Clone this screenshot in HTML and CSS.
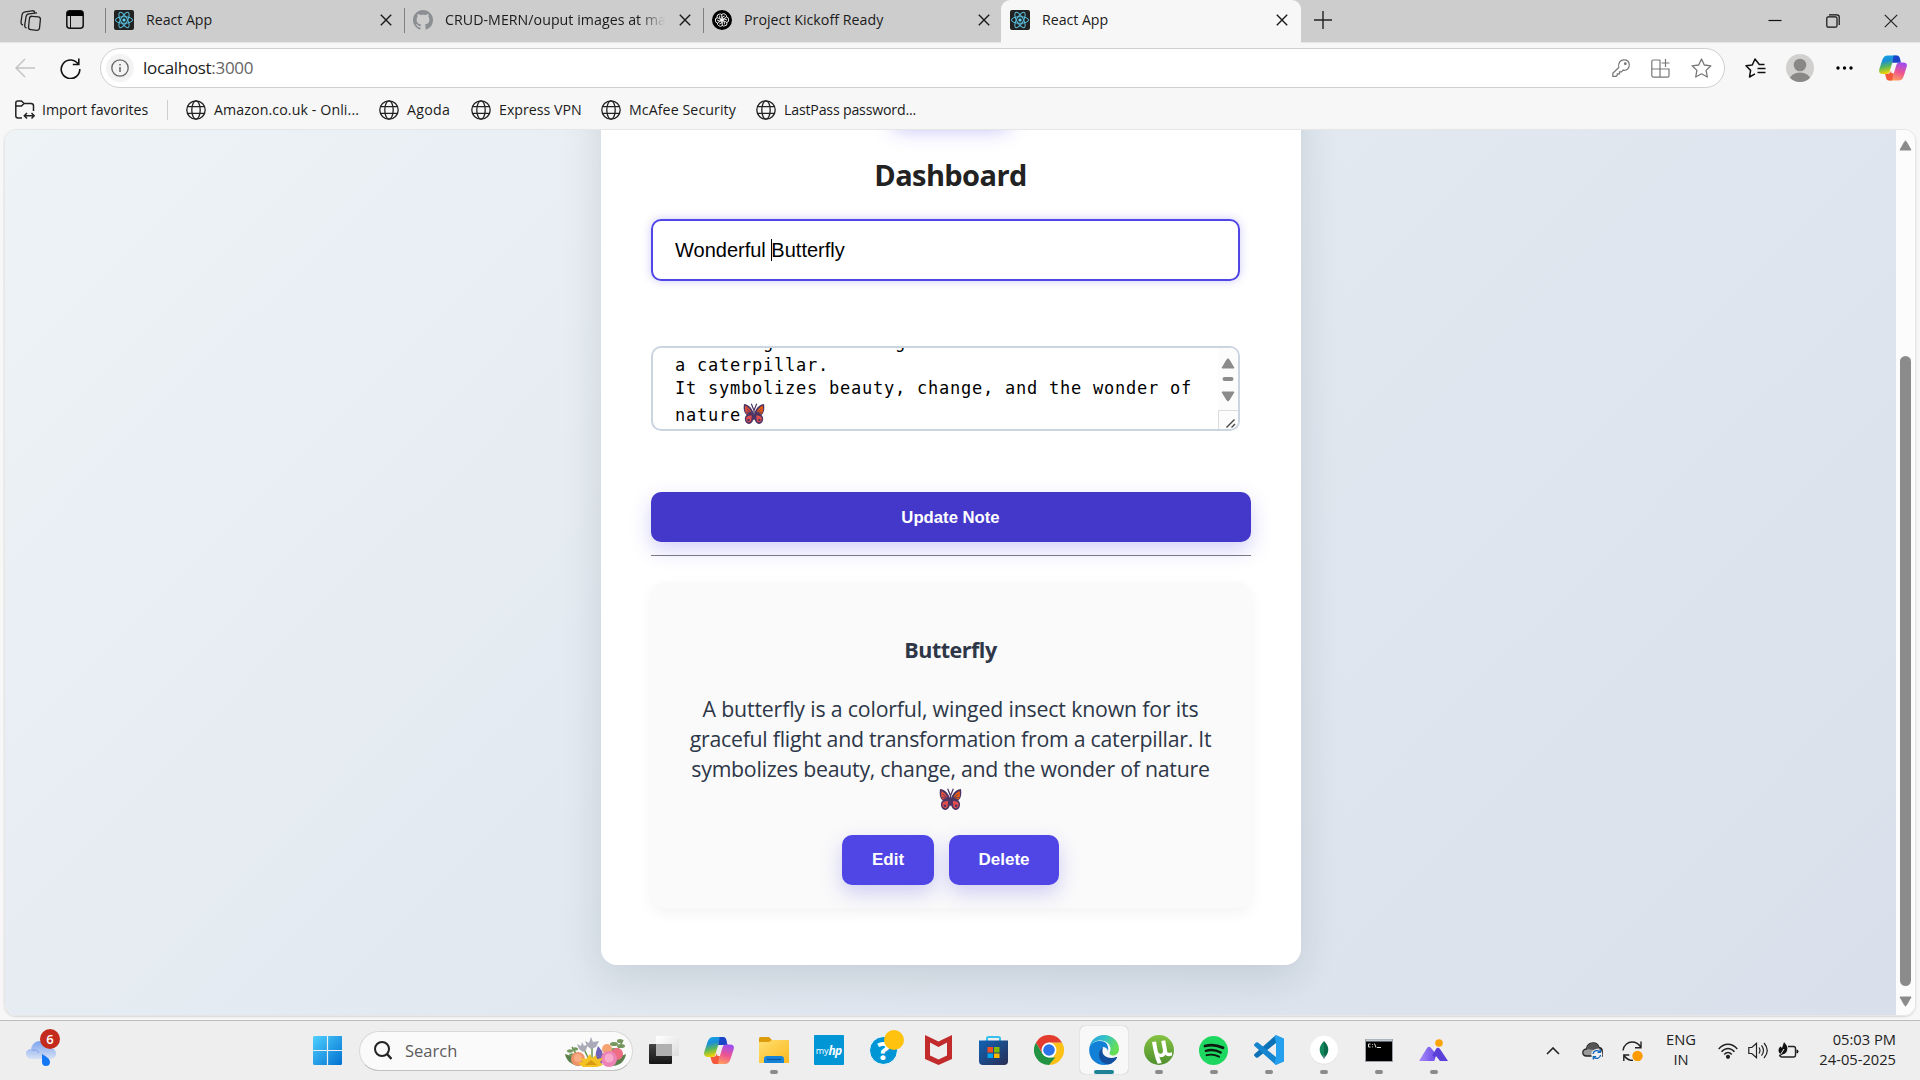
FILE: index.html
```html
<!DOCTYPE html>
<html lang="en">
<head>
<meta charset="utf-8">
<title>React App</title>
<link rel="stylesheet" href="styles.css">
</head>
<body>
<svg class="defs" width="0" height="0">
  <defs>
    <linearGradient id="cpA" x1="0" y1="0" x2=".25" y2="1"><stop offset="0" stop-color="#12a4e8"/><stop offset=".35" stop-color="#1b8fd8"/><stop offset=".65" stop-color="#5cb85a"/><stop offset="1" stop-color="#f5d400"/></linearGradient>
    <linearGradient id="cpB" x1=".6" y1="0" x2=".3" y2="1"><stop offset="0" stop-color="#a04df0"/><stop offset=".5" stop-color="#ee5590"/><stop offset="1" stop-color="#ffa45c"/></linearGradient>
    <linearGradient id="win" x1="0" y1="0" x2="1" y2="1"><stop offset="0" stop-color="#4fd0ff"/><stop offset="1" stop-color="#0070d0"/></linearGradient>
    <linearGradient id="cloud" x1="0" y1="0" x2="0" y2="1"><stop offset="0" stop-color="#7da3ee"/><stop offset="1" stop-color="#d5e1f5"/></linearGradient>
    <linearGradient id="folder" x1="0" y1="0" x2="1" y2="1"><stop offset="0" stop-color="#ffdf70"/><stop offset="1" stop-color="#fbb91e"/></linearGradient>
    <linearGradient id="store" x1="0" y1="0" x2="1" y2="1"><stop offset="0" stop-color="#0f63b5"/><stop offset="1" stop-color="#2b2e55"/></linearGradient>
    <linearGradient id="edgeTop" x1="0" y1="0" x2="1" y2=".4"><stop offset="0" stop-color="#1f9fe0"/><stop offset=".5" stop-color="#35c1c8"/><stop offset="1" stop-color="#66df55"/></linearGradient>
    <linearGradient id="ut" x1="0" y1="0" x2="0" y2="1"><stop offset="0" stop-color="#84c341"/><stop offset="1" stop-color="#4e8f2f"/></linearGradient>
    <linearGradient id="hill" x1="0" y1="0" x2="1" y2="0"><stop offset="0" stop-color="#a78bfa"/><stop offset="1" stop-color="#6d4de6"/></linearGradient>
    <linearGradient id="dark" x1="0" y1="0" x2="0" y2="1"><stop offset="0" stop-color="#444"/><stop offset="1" stop-color="#151515"/></linearGradient>
    <symbol id="react" viewBox="0 0 20 20"><rect width="20" height="20" rx="2" fill="#222"/><g fill="none" stroke="#58bfdc" stroke-width="1"><ellipse cx="10" cy="10" rx="8.600" ry="3.300"/><ellipse cx="10" cy="10" rx="8.600" ry="3.300" transform="rotate(60 10 10)"/><ellipse cx="10" cy="10" rx="8.600" ry="3.300" transform="rotate(120 10 10)"/></g><circle cx="10" cy="10" r="1.600" fill="#61dafb"/></symbol>
    <symbol id="close" viewBox="0 0 12 12"><path d="M.8.8l10.400 10.400M11.200.8L.8 11.200" stroke="#1a1a1a" stroke-width="1.400"/></symbol>
    <symbol id="globe" viewBox="0 0 20 20"><g fill="none" stroke="#222" stroke-width="1.300"><circle cx="10" cy="10" r="9.200"/><ellipse cx="10" cy="10" rx="4.200" ry="9.200"/><path d="M1.600 6.700h16.800M1.600 13.300h16.800"/></g></symbol>
    <symbol id="copilot" viewBox="0 0 30 27"><path d="M17 0h-7.500C6 0 4.500 2 3.500 5L.4 14.500C-.6 18 .8 20 4 20h4c2 0 3-1.200 3.500-3l3.300-11c.7-2.300 1.500-3.500 3.500-3.500h3C20.700 1 19.500 0 17 0z" fill="url(#cpA)"/><path d="M15.500 0h3.800c2 0 2.700 1.500 3.200 3.300L23.500 8H14l1-3.500c.5-1.500.5-3 .5-4.500z" fill="#1b45c8"/><path d="M13 27h7.500c3.500 0 5-2 6-5l3.100-9.500C30.600 9 29.200 7.500 26 7.500h-4c-2 0-3 1.200-3.500 3l-3.300 11c-.7 2.300-1.500 3.500-3.500 3.500h-3C9.300 26 10.500 27 13 27z" fill="url(#cpB)"/><path d="M14 27h-3.300c-2 0-2.700-1.500-3.200-3.300L6.500 20H9c2 0 3.300-1.700 3.800-3.500L13.500 19h2.400l-1 4c-.5 1.500-.5 4-.9 4z" fill="#f4593c"/></symbol>
    <symbol id="butterfly" viewBox="0 0 22 22"><path d="M1 1c4 .4 7.500 3.500 9.300 8L11 12l.7-3C13.500 4.500 17 1.400 21 1c.8 4.500.2 9-2.600 11 1.800 1.300 2.300 4 1.200 6.500-1.500 3.300-5.600 3.200-7.100.1L11 15.500l-1.500 3.100c-1.500 3.100-5.600 3.200-7.100-.1C1.300 16 1.800 13.300 3.600 12 .8 10 .2 5.500 1 1z" fill="#4c3563"/><path d="M2.300 2.800c2 .8 4.500 3 6 6.200l-5 2C2 9 1.700 6 2.300 2.800z" fill="#e2503d"/><path d="M19.700 2.800c-2 .8-4.500 3-6 6.200l5 2c1.300-2 1.600-5 1-8.200z" fill="#f6600c"/><path d="M8.800 12.600c-2-.4-5.300.4-5.600 2.500-.5 4.500 4 5.500 5 2.500zM13.200 12.600c2-.4 5.300.4 5.600 2.500.5 4.500-4 5.500-5 2.500z" fill="#e54d4c"/><path d="M3.500 6l4 3M18.500 6l-4 3M3 9.200l5 .3M19 9.200l-5 .3" stroke="#4c3563" stroke-width=".8"/><circle cx="5.600" cy="17" r="1.200" fill="#4c3563"/><circle cx="16.400" cy="17" r="1.200" fill="#4c3563"/><path d="M11 17V7M11 7.500L8.300.8M11 7.500L13.700.8" stroke="#4c3563" stroke-width="1.200" fill="none"/></symbol>
  </defs>
</svg>

<header class="tabstrip">
  <div class="tab-tools">
    <svg width="22" height="21" viewBox="0 0 22 21" fill="none" stroke="#222" stroke-width="1.300"><rect x="9" y="6.500" width="11" height="13.500" rx="2.500" transform="rotate(6 14 13)"/><path d="M6.500 18c-1.500-.3-2-1.300-1.800-2.800L6 7c.3-2 1.300-3 3-3.200l8-.9M3 15.200C1.500 14.500.8 13.500 1 12l1-7c.3-2 1.300-2.900 3-3.200L12 .8c1.500-.2 2.500.3 2.800 1.700"/></svg>
    <svg width="18" height="19" viewBox="0 0 18 19"><rect x=".8" y=".8" width="16.400" height="17.400" rx="3" fill="none" stroke="#111" stroke-width="1.500"/><path d="M1 6V3.500C1 2 2 1 3.500 1h11C16 1 17 2 17 3.500V6z" fill="#000"/><path d="M4.500 6v12" stroke="#111" stroke-width="1"/></svg>
  </div>
  <div class="tab"><svg class="fav"><use href="#react"/></svg><span class="tab-title">React App</span><svg class="x"><use href="#close"/></svg></div>
  <div class="tab"><svg class="fav" viewBox="0 0 16 16"><path fill="#8b8e92" d="M8 0C3.580 0 0 3.580 0 8c0 3.540 2.290 6.530 5.470 7.590.4.070.55-.17.55-.38 0-.19-.01-.82-.01-1.490-2.010.37-2.530-.49-2.690-.94-.09-.23-.48-.94-.82-1.130-.28-.15-.68-.52-.01-.53.63-.01 1.080.58 1.230.82.72 1.210 1.870.87 2.330.66.07-.52.28-.87.51-1.070-1.780-.2-3.640-.89-3.640-3.950 0-.87.31-1.590.82-2.150-.08-.2-.36-1.020.08-2.120 0 0 .67-.21 2.200.82.64-.18 1.320-.27 2-.27s1.360.09 2 .27c1.530-1.040 2.200-.82 2.200-.82.44 1.100.16 1.920.08 2.120.51.56.82 1.270.82 2.150 0 3.070-1.870 3.750-3.650 3.950.29.25.54.73.54 1.480 0 1.070-.01 1.930-.01 2.200 0 .21.15.46.55.38A8.010 8.010 0 0 0 16 8c0-4.420-3.580-8-8-8z"/></svg><span class="tab-title fade">CRUD-MERN/ouput images at main</span><svg class="x"><use href="#close"/></svg></div>
  <div class="tab"><svg class="fav" viewBox="0 0 20 20"><circle cx="10" cy="10" r="10" fill="#000"/><g fill="none" stroke="#fff" stroke-width=".9"><path id="petal" d="M10 4.200a3 3 0 0 1 4.600 2.900L10 9.700 7.700 8.300V5.600"/><use href="#petal" transform="rotate(60 10 10)"/><use href="#petal" transform="rotate(120 10 10)"/><use href="#petal" transform="rotate(180 10 10)"/><use href="#petal" transform="rotate(240 10 10)"/><use href="#petal" transform="rotate(300 10 10)"/></g></svg><span class="tab-title wide">Project Kickoff Ready</span><svg class="x"><use href="#close"/></svg></div>
  <div class="tab active"><svg class="fav"><use href="#react"/></svg><span class="tab-title">React App</span><svg class="x"><use href="#close"/></svg></div>
  <svg class="plus" width="18" height="18" viewBox="0 0 18 18"><path d="M9 0v18M0 9h18" stroke="#222" stroke-width="1.400"/></svg>
  <div class="window-buttons">
    <svg width="14" height="14" viewBox="0 0 14 14"><path d="M.5 6.500h13" stroke="#111" stroke-width="1.200"/></svg>
    <svg width="14" height="14" viewBox="0 0 14 14" fill="none" stroke="#111" stroke-width="1.200"><rect x=".8" y="2.800" width="10.200" height="10.400" rx="1.500"/><path d="M3 .8h8c1.300 0 2.200.9 2.200 2.200v8"/></svg>
    <svg width="14" height="14" viewBox="0 0 14 14"><path d="M.8.8l12.400 12.400M13.200.8L.8 13.200" stroke="#222" stroke-width="1.200"/></svg>
  </div>
</header>

<nav class="toolbar">
  <svg class="back" width="20" height="20" viewBox="0 0 20 20" fill="none" stroke="#c4c4c4" stroke-width="1.500"><path d="M20 10H1M10 1L1 10l9 9"/></svg>
  <svg class="reload" width="21" height="21" viewBox="0 0 21 21" fill="none" stroke="#111" stroke-width="1.600"><path d="M18.500 6.500A9.300 9.300 0 1 0 19.800 11M18.800.5v6h-6"/></svg>
  <div class="address">
    <span class="info"><svg width="18" height="18" viewBox="0 0 18 18" fill="none" stroke="#666" stroke-width="1.300"><circle cx="9" cy="9" r="8.200"/><path d="M9 8v5M9 5v1.600" stroke-width="1.500"/></svg></span>
    <span class="url">localhost<i>:3000</i></span>
    <div class="address-tools">
      <svg width="18" height="18" viewBox="0 0 18 18" fill="none" stroke="#777" stroke-width="1.200"><path d="M6.800 8.500C5.800 4 8.500.8 12 .8s5.300 2.400 5.300 5.300c0 3.600-3 5.800-6.300 5l-1.500 1.700H7.500v2H5.300v1.500L4 17.300H.8v-3z"/><circle cx="13.300" cy="4.700" r=".8" fill="#777"/></svg>
      <svg width="19" height="19" viewBox="0 0 19 19" fill="none" stroke="#777" stroke-width="1.200"><path d="M9 1H2.500C1.500 1 .8 1.700.8 2.500v14c0 1 .7 1.700 1.700 1.700h14c.9 0 1.500-.7 1.500-1.700V10H.8M9 1v17M14.500 0v8M10.500 4h8"/></svg>
      <svg width="21" height="20" viewBox="0 0 21 20" fill="none" stroke="#777" stroke-width="1.300" stroke-linejoin="round"><path d="M10.500 1l2.800 6 6.600.8-4.800 4.600 1.200 6.600-5.800-3.200L4.700 19l1.200-6.600L1.100 7.800 7.700 7z"/></svg>
    </div>
  </div>
  <div class="toolbar-right">
    <svg width="21" height="20" viewBox="0 0 21 20" fill="none" stroke="#111" stroke-width="1.500" stroke-linejoin="round"><path d="M19.500 6.500h-5.200L10 1 7.300 7 1 7.800l4.600 4.600L4.500 19l5.500-3.200M12.500 10.500h8M12.500 14.500h8"/></svg>
    <svg width="28" height="28" viewBox="0 0 28 28"><clipPath id="av"><circle cx="14" cy="14" r="14"/></clipPath><g clip-path="url(#av)"><path d="M0 0h28v28H0z" fill="#d2d0ce"/><circle cx="14" cy="11" r="6.300" fill="#8a8886"/><ellipse cx="14" cy="25" rx="10" ry="6.500" fill="#8a8886"/></g></svg>
    <svg width="17" height="4" viewBox="0 0 17 4"><circle cx="2" cy="2" r="1.700"/><circle cx="8.500" cy="2" r="1.700"/><circle cx="15" cy="2" r="1.700"/></svg>
    <svg width="28" height="26"><use href="#copilot"/></svg>
  </div>
</nav>

<div class="bookmarks">
  <div class="bm import"><svg width="20" height="20" viewBox="0 0 20 20" fill="none" stroke="#222" stroke-width="1.500"><path d="M7 18H3c-1.300 0-2.200-.9-2.200-2.200V3C.8 1.800 1.700 1 3 1h3.500L9 3.500h7c1.500 0 2.500.8 2.500 2.300V11M1 6h5.500L9 3.500M9.500 15.800H19M12 13l-2.700 2.800 2.700 2.700M16.500 13l2.700 2.800-2.700 2.700"/></svg><span>Import favorites</span></div>
  <div class="bm b1"><svg width="20" height="20"><use href="#globe"/></svg><span>Amazon.co.uk - Onli...</span></div>
  <div class="bm b2"><svg width="20" height="20"><use href="#globe"/></svg><span>Agoda</span></div>
  <div class="bm b3"><svg width="20" height="20"><use href="#globe"/></svg><span>Express VPN</span></div>
  <div class="bm b4"><svg width="20" height="20"><use href="#globe"/></svg><span>McAfee Security</span></div>
  <div class="bm b5"><svg width="20" height="20"><use href="#globe"/></svg><span>LastPass password...</span></div>
</div>

<div class="viewport">
  <main class="page">
    <section class="card">
      <div class="card-action"></div>
      <h2>Dashboard</h2>
      <div class="field"><span>Wonderful </span><b class="caret"></b><span>Butterfly</span></div>
      <div class="area">
        <div class="area-text">
          <p>for its graceful flight and transformation from</p>
          <p>a caterpillar.</p>
          <p>It symbolizes beauty, change, and the wonder of</p>
          <p class="last">nature<svg width="22" height="22"><use href="#butterfly"/></svg></p>
        </div>
        <div class="area-scroll">
          <svg width="20" height="66" viewBox="0 0 20 66" fill="#8b8b8b"><path d="M4 20l5-8.500q1-1.500 2 0l5 8.500z" stroke="#8b8b8b" stroke-linejoin="round"/><rect x="4.500" y="29" width="11" height="4" rx="2"/><path d="M4 44h12l-5 8.300q-1 1.500-2 0z" stroke="#8b8b8b" stroke-linejoin="round"/></svg>
          <svg class="grip" width="20" height="20" viewBox="0 0 20 20"><path d="M.5 20V.5H20" fill="none" stroke="#dcdcdc"/><path d="M8.500 17.500l8-8M13.500 17.500l3.500-3.500" stroke="#444" stroke-width="1.400"/></svg>
        </div>
      </div>
      <button class="btn update">Update Note</button>
      <hr>
      <article class="note">
        <h3>Butterfly</h3>
        <p><span>A butterfly is a colorful, winged insect known for its</span><span class="tight">graceful flight and transformation from a caterpillar. It</span><span class="tight">symbolizes beauty, change, and the wonder of nature</span><span class="emoji"><svg width="23" height="23"><use href="#butterfly"/></svg></span></p>
        <div class="actions"><button class="btn edit">Edit</button><button class="btn delete">Delete</button></div>
      </article>
    </section>
  </main>
  <div class="scrollbar">
    <svg width="13" height="11" viewBox="0 0 13 11"><path d="M1 10l4.700-8.300q.8-1.400 1.600 0L12 10z" fill="#8b8b8b" stroke="#8b8b8b" stroke-linejoin="round"/></svg>
    <div class="thumb"></div>
    <svg width="13" height="11" viewBox="0 0 13 11"><path d="M1 1h11L7.300 9.300q-.8 1.400-1.600 0z" fill="#8b8b8b" stroke="#8b8b8b" stroke-linejoin="round"/></svg>
  </div>
</div>

<footer class="taskbar">
  <div class="weather"><svg width="30" height="26" viewBox="0 0 30 26"><path d="M7 19c-4 0-7-1.800-7-5.300C0 10.500 2.500 9 5 9 6 4 9.500 1 14 1c5 0 8 3 9 7 4 0 7 1.800 7 5.500S27 19 23 19z" fill="url(#cloud)"/><path d="M6 10c3-.5 6 .5 7 3" fill="none" stroke="#7fa2e8" stroke-width="1"/><path d="M16 14c4 2.500 8 4.500 8 8a4 4 0 0 1-8 0z" fill="#1478f5"/></svg><span class="badge">6</span></div>
  <div class="app start"><svg width="29" height="29" viewBox="0 0 29 29" fill="url(#win)"><path d="M1.500 0H29v27.500q0 1.500-1.500 1.500h-26Q0 29 0 27.500v-26Q0 0 1.500 0z"/><path d="M13.900 0h1.200v29h-1.200zM0 13.900h29v1.200H0z" fill="#eee"/></svg></div>
  <div class="search">
    <svg width="18" height="19" viewBox="0 0 18 19" fill="none" stroke="#222" stroke-width="2"><circle cx="8" cy="8" r="7"/><path d="M13 13l4.500 5" stroke-width="2.400"/></svg>
    <span>Search</span>
    <svg class="flowers" width="62" height="31" viewBox="0 0 62 31">
      <path d="M0 17c1 6 6 11 14 12l4-2C13 20 6 19 0 17zM61 17c-1 7-6 12-14 12l-4-2c5-7 12-7 18-10z" fill="#5a7f4a"/>
      <g fill="none" stroke="#6a9455" stroke-width="1.500"><path d="M14 22L7 10M25 25L19 12M27 24V10M46 18c5-3 9-8 12-15"/></g>
      <g fill="#75985f"><ellipse cx="5" cy="14" rx="3" ry="1.700"/><ellipse cx="10" cy="12" rx="3" ry="1.700"/><ellipse cx="7" cy="18" rx="3" ry="1.700"/><ellipse cx="49" cy="7" rx="4" ry="2"/><ellipse cx="56" cy="9" rx="4" ry="2"/><ellipse cx="49" cy="13" rx="4" ry="2"/><ellipse cx="55" cy="4" rx="3" ry="2"/></g>
      <g fill="#a9a9b8"><path d="M12 7l4 2 1-4 2 4 4-2-2 6-3 2-4-3zM20 4l4 2 2-6 2 5 6-1-3 6-5 2-4-3z"/></g>
      <path d="M33 9l4 5 2 8-3 6-6-4 1-9z" fill="#7063b7"/>
      <circle cx="13" cy="22" r="7" fill="#ef9169"/><circle cx="13" cy="21" r="4" fill="#f7ad86"/>
      <circle cx="42" cy="12" r="5" fill="#f4a373"/><circle cx="52" cy="17" r="6" fill="#ed6e82"/>
      <circle cx="44" cy="22" r="8" fill="#ec82b5"/><circle cx="44" cy="21" r="4.500" fill="#f8aacd"/>
      <path d="M25 17l2 4 4-3 1 4 6-1-3 4 3 3-6 2H18l-5-4 5-1-3-4 6 1z" fill="#f3c324"/><path d="M20 28l6-5 6 5z" fill="#d99a12"/>
    </svg>
  </div>
  <div class="app"><svg width="30" height="28" viewBox="0 0 30 28"><defs><linearGradient id="pane" x1="0" y1="0" x2="1" y2="1"><stop offset="0" stop-color="#fff"/><stop offset="1" stop-color="#ddd"/></linearGradient></defs><rect y="8" width="23" height="20" rx="1" fill="url(#dark)"/><rect x="7" y="0" width="23" height="20" rx="1" fill="url(#pane)"/><path d="M7 8h16v12H7z" fill="#b0b0b0"/></svg></div>
  <div class="app"><svg width="30" height="27"><use href="#copilot"/></svg></div>
  <div class="app run"><svg width="30" height="26" viewBox="0 0 30 26"><path d="M0 1.500Q0 0 1.500 0H10l3 3h15.500Q30 3 30 4.500V12H0z" fill="#dd9c0c"/><path d="M0 5h10l3-2h15.500Q30 3 30 4.500V26H0z" fill="url(#folder)"/><path d="M5 26v-4q0-3 3-3h14q3 0 3 3v4z" fill="#1583d8"/><path d="M8 22.500h14" stroke="#0b57a0" stroke-width="1.200"/></svg></div>
  <div class="app"><div class="myhp"><span>my</span><b>hp</b></div></div>
  <div class="app"><div class="help">?<i></i></div></div>
  <div class="app"><svg width="27" height="30" viewBox="0 0 27 30"><path d="M0 0l13.500 6.500L27 0v24l-13.500 6L0 24zM5 7.500v13l8.500 4 8.500-4v-13l-8.500 4.500z" fill="#c12b2b" fill-rule="evenodd"/></svg></div>
  <div class="app"><svg width="29" height="29" viewBox="0 0 29 29"><path d="M8 7V2.500Q8 1 9.500 1h10Q21 1 21 2.500V7" fill="none" stroke="#35c0f0" stroke-width="2"/><path d="M0 4.500h29V25q0 4-4 4H4q-4 0-4-4z" fill="url(#store)"/><path d="M8.500 11h5.500v5.500H8.500z" fill="#f25022"/><path d="M15 11h5.500v5.500H15z" fill="#7fba00"/><path d="M8.500 17.500h5.500V22H8.500z" fill="#00a4ef"/><path d="M15 17.500h5.500V22H15z" fill="#ffb900"/></svg></div>
  <div class="app"><svg width="30" height="30" viewBox="0 0 48 48"><path d="M24 12h20.800A24 24 0 0 1 24 48l10-18z" fill="#fbc116"/><path d="M24 48A24 24 0 0 1 3.200 12l10.400 18L24 36h10z" fill="#229342"/><path d="M3.200 12A24 24 0 0 1 44.800 12H24L13.600 30z" fill="#e33b2e"/><circle cx="24" cy="24" r="12" fill="#fff"/><circle cx="24" cy="24" r="9.300" fill="#2a73e8"/></svg></div>
  <div class="app open"><svg width="30" height="30" viewBox="0 0 30 30"><path d="M15 0C7 0 1.500 6 .5 12c2-4 6-6.500 11-6.500 6 0 10 4 10 8.500 0 2-1 3-1 4.500 0 1.500 2 2 4 2 4 0 5.500-4 5.500-6.500C30 6.500 23.500 0 15 0z" fill="url(#edgeTop)"/><path d="M.5 12C-1.500 22 6 30 15 30c4 0 7-1 9-2.500-6 1-12-2-13-7.500-.6-3.500.7-6 3-8 2 0 4.500 1.500 5 4C20 10 17 6 11 6 6 6 2 8.500.5 12z" fill="#1380d8"/><path d="M14 12c-3 2-4.500 5.500-4 9 .7 5 5 8.600 10 8.200 3.500-1 6.500-3.500 8-6.500.3-.7-.3-1-.8-.7-6 2.500-13 0-13.700-5-.2-2 .3-3.500.5-5z" fill="#124f9e"/></svg></div>
  <div class="app run"><svg width="30" height="30" viewBox="0 0 30 30"><circle cx="15" cy="15" r="15" fill="url(#ut)"/><path d="M8 7l4-.6 1.700 9.400c.4 2.300 1.500 3.200 3.200 3 1.800-.3 2.400-1.600 2-4L17.200 6l4-.7 2 11c.2 1.300.8 1.700 2.500 1.400l2.300-.4v3.200c-3 1-5.300 1-6.500-.7-1.500 2.200-4.300 3-6.300 1.700l2.500 6.500-4 .8C11 23 9.500 16 8 7z" fill="#fff"/></svg></div>
  <div class="app run"><svg width="29" height="29" viewBox="0 0 29 29"><circle cx="14.500" cy="14.500" r="14.500" fill="#1ed760"/><g fill="none" stroke="#0c1a10" stroke-linecap="round"><path d="M6 10c6-1.700 12-1.200 18 1.800" stroke-width="2.800"/><path d="M6.800 14.800c5-1.400 10.300-.9 15 1.700" stroke-width="2.300"/><path d="M7.500 19.200c4.300-1.100 8.500-.6 12.500 1.500" stroke-width="1.900"/></g></svg></div>
  <div class="app run"><svg width="30" height="30" viewBox="0 0 30 30"><path d="M22 0v8L4 22.500q-1 .7-2 0L.5 21q-1-1 0-2z" fill="#0b72b8"/><path d="M22 30v-8L4 7.500q-1-.7-2 0L.5 9q-1 1 0 2z" fill="#1585cf"/><path d="M22 0l8 3.500v23L22 30l-1.500-1.500L22 22V8l-1.500-6z" fill="#25a0ee"/></svg></div>
  <div class="app run"><svg width="30" height="30" viewBox="0 0 30 30"><circle cx="15" cy="15.500" r="14" fill="#ddd"/><circle cx="15" cy="14.800" r="14" fill="#fff"/><path d="M15 6c3 3 4.500 6 4.300 9-.2 3.500-2 6-4.300 8z" fill="#0a6b4b"/><path d="M15 6c-3 3-4.500 6-4.300 9 .2 3.500 2 6 4.300 8z" fill="#13865c"/><path d="M15 20v4" stroke="#789" stroke-width="1"/></svg></div>
  <div class="app run"><svg width="28" height="23" viewBox="0 0 28 23"><rect x=".5" y=".5" width="27" height="22" fill="#000" stroke="#9aa0a6"/><path d="M1 1.500h26" stroke="#c5cbd2" stroke-width="2"/><path d="M5.500 5H3.500v3h2M7.500 5v.8M7.500 7.500v.8M9.500 4.500l1.500 4M12 8.500h4" stroke="#ddd" stroke-width="1" fill="none"/></svg></div>
  <div class="app run"><svg width="29" height="22" viewBox="0 0 29 22"><circle cx="20" cy="4" r="3.800" fill="#fca50a"/><path d="M0 22L8 9q2-2.500 4 0l5 6-3 7z" fill="url(#hill)"/><path d="M10 22L17 10q2-2.500 4 0l8 12h-8l-4-5-2 5z" fill="#5b3fd9"/><path d="M10 22l3-6 3 4-1 2z" fill="#7c5cf0"/></svg></div>
  <div class="tray">
    <svg class="chev" width="14" height="8" viewBox="0 0 14 8"><path d="M1 7l6-6 6 6" fill="none" stroke="#222" stroke-width="1.600"/></svg>
    <svg class="cl" width="21" height="18" viewBox="0 0 21 18"><path d="M4.500 14C2 14 .8 12.500.8 10.500S2.500 7 4.500 7C5 3.500 7.500 1 11 1c3.300 0 5.300 2 6 4.500 2 .3 3.200 1.500 3.200 3.500v5z" fill="#999" stroke="#222" stroke-width="1.300"/><path d="M4.500 7C5 3.500 7.500 1 11 1c3.300 0 5.300 2 6 4.500L12 8z" fill="#555"/><circle cx="14.800" cy="12.500" r="5.500" fill="#eee"/><path d="M11 12a4 4 0 0 1 7-2M18.600 13a4 4 0 0 1-7 2M18.300 7.500V10.300H15.500M11.300 17.500V14.700h2.800" fill="none" stroke="#0f66c0" stroke-width="1.300"/></svg>
    <svg class="sy" width="21" height="20" viewBox="0 0 21 20"><path d="M1 9.500C1.500 4 6 1 10 1c4 0 7 2 9 5.500M19 .5v6.300h-6M11 19.500c-4 0-6.500-1.500-9-5M1.800 20v-6h5.500" fill="none" stroke="#222" stroke-width="1.400"/><circle cx="15.500" cy="15" r="5.200" fill="#ff9a00"/></svg>
    <div class="lang"><span>ENG</span><span>IN</span></div>
    <svg class="wf" width="20" height="16" viewBox="0 0 20 16" fill="none" stroke="#222" stroke-width="1.400"><path d="M.7 6C6-.4 14-.4 19.300 6M3.500 8.800c4-4.500 9-4.500 13 0M6.200 11.500c2.400-2.700 5.200-2.700 7.600 0"/><circle cx="10" cy="13.800" r="1.400" fill="#222"/></svg>
    <svg class="so" width="20" height="17" viewBox="0 0 20 17" fill="none" stroke="#222" stroke-width="1.200"><path d="M.8 5.500h3L8.500 1.300v14.400L3.800 11.500h-3zM11 5.500c1.300 2 1.300 4 0 6M13.500 3.300c2.600 3.400 2.600 7 0 10.400M16 1c4.200 4.800 4.200 10.200 0 15"/></svg>
    <svg class="ba" width="21" height="17" viewBox="0 0 21 17"><path d="M10 4.500h5.500q2 0 2 2V13q0 2-2 2H4q-2 0-2-2" fill="none" stroke="#222" stroke-width="1.400"/><path d="M18.500 7.500q2 0 2 2t-2 2z" fill="#111"/><path d="M6 0c1 2 3 3 3.300 5.500C9.700 9 8 12 4.500 12.500L1 14.500l1-3C-.5 9 .5 6 2.500 4.500L4 6z" fill="#111"/><path d="M2.500 12.500L6 7" stroke="#eee"/></svg>
    <div class="clock"><span class="time">05:03 PM</span><span class="date">24-05-2025</span></div>
  </div>
</footer>
</body>
</html>
```
FILE: styles.css
```css
* { box-sizing: border-box; }
body {
  margin: 0;
  width: 1920px;
  height: 1080px;
  overflow: hidden;
  display: flex;
  flex-direction: column;
  background: #f7f7f7;
  color: #1b1b1b;
  font-family: "Open Sans", "Noto Sans", sans-serif;
}
svg { display: block; flex: none; }
.defs { height: 0; }
p, h2, h3 { margin: 0; }

/* Tab strip */
.tabstrip { height: 43px; flex: none; display: flex; background: #cdcdcd; border-bottom: 1px solid #e6e6e6; }
.tab-tools { width: 105px; padding: 10px 0 0 20px; display: flex; gap: 24px; }
.tab { width: 299px; height: 43px; padding: 0 12.500px 3px 8px; display: flex; align-items: center; }
.tab::before { content: ""; width: 1px; height: 25px; background: #808080; margin-left: -8px; }
.tab .fav { width: 20px; height: 20px; margin-left: 8px; }
.tab-title { flex: 1; margin: -2px 0 0 12px; font-size: 14.200px; white-space: nowrap; overflow: hidden; letter-spacing: -.04px; }
.wide { letter-spacing: .03px; }
.fade { -webkit-mask-image: linear-gradient(90deg, #000 88%, transparent); mask-image: linear-gradient(90deg, #000 88%, transparent); margin-right: 14px; letter-spacing: .04px; }
.tab .x { width: 12px; height: 12px; }
.tab.active { width: 300px; background: #f7f7f7; border-radius: 9px 9px 0 0; margin-left: -1px; }
.tab.active::before { background: transparent; }
.tab.active .x { margin-right: 1px; }
.plus { margin: 11px 0 0 13px; }
.window-buttons { margin-left: auto; padding: 14px 22px 0 0; display: flex; gap: 44px; }

/* Toolbar */
.toolbar { height: 50px; flex: none; display: flex; align-items: center; padding: 0 13px 0 15px; }
.back { margin-right: 24.500px; }
.reload { margin-right: 19.500px; }
.address { width: 1625px; height: 40px; display: flex; align-items: center; background: #fff; border: 1px solid #cfcfcf; border-radius: 20px; padding: 0 12px 0 5px; }
.info { width: 28px; height: 28px; border-radius: 50%; background: #f3f3f3; display: grid; place-items: center; }
.url { margin: -2px 0 0 9px; font-size: 17px; letter-spacing: -.32px; }
.url i { font-style: normal; color: #666; }
.address-tools { margin-left: auto; display: flex; gap: 21px; align-items: center; }
.toolbar-right { margin-left: auto; display: flex; align-items: center; }
.toolbar-right svg:nth-child(2) { margin-left: 20px; }
.toolbar-right svg:nth-child(3) { margin-left: 22px; }
.toolbar-right svg:nth-child(4) { margin-left: 26px; }

/* Bookmarks */
.bookmarks { height: 36px; flex: none; display: flex; align-items: center; padding: 0 0 2px 15px; font-size: 14.200px; letter-spacing: 0; }
.bm { display: flex; align-items: center; gap: 8px; white-space: nowrap; }
.bm span { margin-top: -2px; }
.import { gap: 7px; width: 153px; border-right: 1px solid #cfcfcf; }
.b1 { margin-left: 18px; width: 193px; }
.b1 span { letter-spacing: .1px; }
.b2 { width: 92px; }
.b2 span { letter-spacing: .3px; }
.b3 { width: 130px; }
.b4 { width: 155px; }
.b4 span { letter-spacing: .08px; }
.b5 span { letter-spacing: -.2px; }

/* Browser viewport */
.viewport { height: 887px; flex: none; margin: 0 4px; display: flex; border: 1px solid #e6e6e6; border-radius: 12px; overflow: hidden; box-shadow: 0 1px 2px #0002; }
.page { flex: 1; background: linear-gradient(135deg, #eef3f6 0%, #e1e8f0 50%, #d9e0eb 100%); }
.scrollbar { width: 19px; background: #fcfcfc; display: flex; flex-direction: column; align-items: center; padding: 10px 0 8px; }
.thumb { width: 11px; height: 630px; margin: 205px 0 10px; border-radius: 6px; background: #8b8b8b; }

/* Dashboard card */
.card { width: 700px; height: 935px; margin: -100px auto 0; padding: 50px; background: #fff; border-radius: 16px; box-shadow: 0 12px 40px rgba(0,30,40,.12); text-align: center; display: flex; flex-direction: column; }
.card-action { width: 118px; height: 42px; align-self: center; border-radius: 10px; background: #4f46e5; box-shadow: 0 8px 20px rgba(79,70,229,.34); }
h2 { margin-top: 28px; line-height: 50px; font-size: 29px; font-weight: 700; letter-spacing: -.6px; color: #222; }
.field { width: 589px; height: 62px; margin-top: 19px; border: 2px solid #4f46e5; border-radius: 10px; box-shadow: 0 0 10px rgba(79,70,229,.28); display: flex; align-items: center; padding: 0 22.500px; font: 20px "Liberation Sans", Arial, sans-serif; color: #000; white-space: pre; }
.caret { width: 1px; height: 22px; background: #000; margin-right: -1px; }
.area { width: 589px; height: 85px; margin-top: 65px; border: 2px solid #cbd5e1; border-radius: 10px; overflow: hidden; display: flex; justify-content: space-between; }
.area-text { padding-left: 22.500px; margin-top: -17px; text-align: left; font: 17px/23px "DejaVu Sans Mono", "Liberation Mono", monospace; letter-spacing: .765px; color: #000; white-space: nowrap; }
.area-text .last { display: flex; align-items: center; line-height: 30px; }
.last svg { margin: -2px 0 0 2px; }
.area-scroll { width: 20px; background: #fcfcfc; display: flex; flex-direction: column; }
.grip { margin-top: -4px; }
.btn { border: 0; border-radius: 10px; background: #4f46e5; color: #fff; height: 50px; padding: 0; font: bold 17px "Liberation Sans", Arial, sans-serif; box-shadow: 0 8px 20px rgba(79,70,229,.25); }
.update { margin-top: 61px; padding-top: 2px; background: #4338ca; font-size: 16.700px; }
hr { width: 600px; height: 1px; border: 0; margin: 13px 0 0; background: #777785; }
.note { margin-top: 26px; height: 326px; padding: 53px 30px 0; border-radius: 14px; background: #fafafa; box-shadow: 0 5px 15px rgba(0,0,0,.05); color: #2d3748; }
h3 { font-size: 21.500px; line-height: 30px; font-weight: 700; letter-spacing: -.5px; }
.note p { margin-top: 29px; font-size: 21.300px; letter-spacing: -.17px; line-height: 30px; white-space: nowrap; display: flex; flex-direction: column; align-items: center; }
.note .tight { letter-spacing: -.26px; }
.emoji { height: 30px; display: flex; align-items: center; }
.actions { margin-top: 21px; display: flex; justify-content: center; gap: 15px; }
.edit { width: 92px; }
.delete { width: 110px; }

/* Taskbar */
.taskbar { height: 60px; margin-top: 4px; flex: none; display: flex; align-items: center; background: #eee; border-top: 1px solid #bdbdbd; color: #222; }
.weather { width: 274px; margin-left: 26px; position: relative; }
.weather svg { margin-top: 4px; }
.badge { position: absolute; left: 14px; top: -7px; width: 20px; height: 20px; border-radius: 50%; background: #c42b1c; color: #fff; font-size: 13px; font-weight: 600; line-height: 20px; text-align: center; }
.app { width: 55px; height: 58px; margin-bottom: 1px; display: grid; place-items: center; position: relative; flex: none; }
.run::after, .open::after { content: ""; position: absolute; left: 24px; top: 49px; width: 8px; height: 4px; border-radius: 2px; background: #8a8a8a; }
.open::after { left: 17.500px; width: 20px; background: #1f8296; }
.open::before { content: ""; position: absolute; left: 3.500px; top: 5px; width: 48px; height: 48px; border-radius: 5px; background: #f8f8f8; box-shadow: 0 0 1px #999; }
.open svg { position: relative; }
.search { width: 274px; height: 40px; margin: 0 3px 0 4px; border: 1px solid #d8d8d8; border-bottom-color: #c0c0c0; border-radius: 20px; background: #fafafa; display: flex; align-items: center; padding: 0 5px 0 14px; flex: none; }
.search span { margin-left: 13px; font-size: 16.500px; color: #5c5c5c; }
.flowers { margin-left: auto; margin-top: 3px; }
.myhp { width: 30px; height: 30px; border-radius: 1px; background: #0096d6; color: #fff; display: flex; justify-content: center; align-items: center; font-size: 9px; }
.myhp b { font-size: 12px; font-style: italic; letter-spacing: -.8px; }
.help { width: 29px; height: 29px; border: 1px solid #fff; border-radius: 50%; background: #0096d6; color: #fff; font-size: 25px; line-height: 26px; font-weight: 800; text-align: center; position: relative; }
.help i { position: absolute; left: 14px; top: -7px; width: 20px; height: 20px; border-radius: 50%; background: #ffc20e; }
.tray { margin-left: auto; padding-right: 24px; display: flex; align-items: center; font-size: 14.700px; line-height: 20px; }
.tray > div { margin-top: -3px; }
.cl { margin-left: 22px; }
.sy { margin-left: 19px; }
.lang { width: 50px; margin-left: 13px; display: flex; flex-direction: column; align-items: center; }
.wf { margin-left: 12px; }
.so { margin-left: 10px; }
.ba { margin-left: 10px; }
.clock { width: 97px; display: flex; flex-direction: column; align-items: flex-end; white-space: nowrap; }
```
